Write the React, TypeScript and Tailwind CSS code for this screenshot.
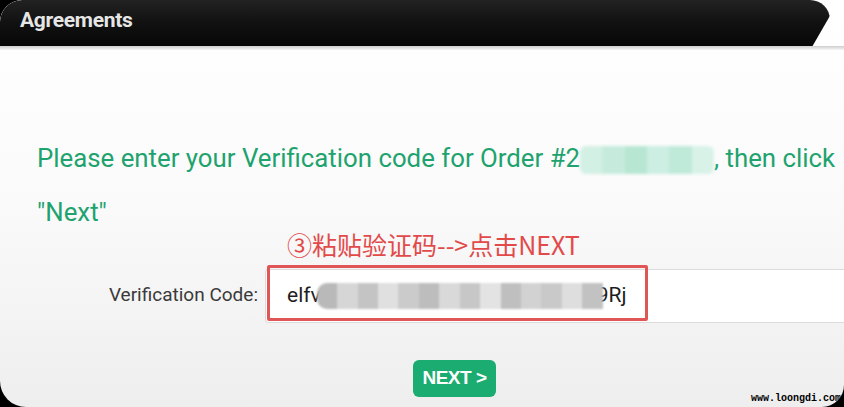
import React from "react";

const mosaic = [
  "#b9b9b9", "#d6d6d6", "#c4c4c4", "#e0e0e0", "#cbcbcb", "#bdbdbd", "#d9d9d9",
  "#c7c7c7", "#e3e3e3", "#bfbfbf", "#d2d2d2", "#c9c9c9", "#dedede", "#c2c2c2",
];

export default function App() {
  return (
    <div className="w-[844px] h-[407px] bg-black overflow-hidden">
      <div className="relative w-full h-full flex flex-col bg-gradient-to-b from-white via-[#fafafa] to-[#eeeeee] rounded-tl-[22px] rounded-bl-[26px] rounded-br-[22px] overflow-hidden">
        {/* header */}
        <div className="h-[46px] w-[830px] flex items-center pl-[20px] pb-[4px] bg-gradient-to-b from-[#222222] via-[#111111] to-[#080808] rounded-tl-[22px] rounded-tr-[20px] [clip-path:polygon(0_0,100%_0,100%_34%,97.9%_100%,0_100%)]">
          <span className="text-[21px] font-bold text-[#e6e6e6] tracking-[-0.3px] font-['Roboto','Liberation_Sans',sans-serif]">
            Agreements
          </span>
        </div>
        <div className="h-[4px] w-full bg-gradient-to-b from-[#cfcfcf] to-[#f6f6f6]" />

        {/* content */}
        <div className="flex flex-col font-['Roboto','Liberation_Sans',sans-serif]">
          <div className="pl-[37px] mt-[81px] text-[25.8px] leading-[54px] text-[#1ea36f] whitespace-nowrap">
            <div className="flex items-center">
              <span>Please enter your Verification code for Order #2</span>
              <span className="inline-flex h-[28px] w-[134px] mt-[4px] blur-[1.5px] rounded-[6px] overflow-hidden">
                <span className="flex-1 bg-[#d3f0e4]" />
                <span className="flex-1 bg-[#c6ebdc]" />
                <span className="flex-1 bg-[#b7e6d3]" />
                <span className="flex-1 bg-[#cdeee2]" />
                <span className="flex-1 bg-[#bfe9d8]" />
                <span className="flex-1 bg-[#d8f2e8]" />
              </span>
              <span>, then click</span>
            </div>
            <div>"Next"</div>
          </div>

          <div className="pl-[287px] mt-[-12px] h-[34px] text-[25px] leading-[34px] text-[#e24a4a] whitespace-nowrap font-['Noto_Sans_CJK_SC','Noto_Sans',sans-serif]">
            ③粘贴验证码--&gt;点击NEXT
          </div>

          <div className="flex items-center mt-[6px]">
            <div className="w-[258px] text-right text-[19px] text-[#3a3a3a]">
              Verification Code:
            </div>
            <div className="relative flex-1 h-[54px] border border-r-0 border-[#dcdcdc] bg-white rounded-l-[3px] ml-[7px] mt-[2px]">
              <div className="absolute left-[1px] top-[-5px] w-[381px] h-[56px] border-[3px] border-[#e05555] rounded-[2px]" />
              <div className="flex items-center h-full pl-[21px] text-[21px] text-[#1e1e1e]">
                <span>elfv</span>
                <span className="flex h-[26px] w-[286px] blur-[1.2px] rounded-l-[10px] overflow-hidden -ml-[4px]">
                  {mosaic.map((c, i) => (
                    <span key={i} className="flex-1" style={{ backgroundColor: c }} />
                  ))}
                </span>
                <span className="-ml-[6px]">9Rj</span>
              </div>
            </div>
          </div>

          <div className="flex justify-start pl-[413px] mt-[37px]">
            <button className="w-[83px] h-[37px] rounded-[6px] bg-[#1aac70] text-white text-[19px] font-bold tracking-[-0.5px] font-['Liberation_Sans','Arial',sans-serif] flex items-center justify-center">
              NEXT &gt;
            </button>
          </div>
        </div>

        <div className="absolute right-[3px] bottom-[3px] text-[10px] leading-[11px] font-bold text-black font-['Liberation_Mono','DejaVu_Sans_Mono',monospace]">
          www.loongdi.com
        </div>
      </div>
    </div>
  );
}
